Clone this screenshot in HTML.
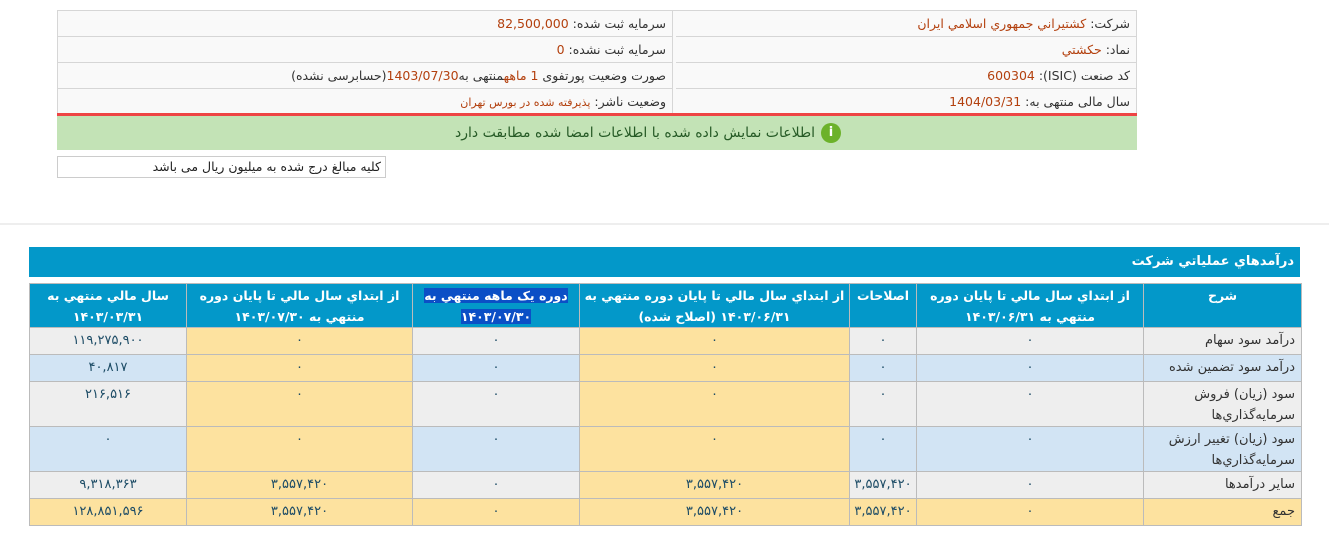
<!DOCTYPE html>
<html><head><meta charset="utf-8"><style>
*{margin:0;padding:0;box-sizing:border-box}
body{width:1329px;height:553px;background:#fff;font-family:"DejaVu Sans","Liberation Sans",sans-serif;font-size:12px;color:#333;position:relative;overflow:hidden;direction:rtl}
.box{position:absolute;left:57px;top:10px;width:1080px;height:104px;border:1px solid #d6d6d6;background:#f9f9f9}
.cell{position:absolute;height:26px;border-bottom:1px solid #d6d6d6;line-height:25px;padding-right:6px;font-size:12.5px;white-space:nowrap}
.r{color:#b3400e}
.red{position:absolute;left:57px;top:113px;width:1080px;height:3px;background:#ee4444}
.green{position:absolute;left:57px;top:116px;width:1080px;height:34px;background:#c3e3b6;color:#265a26;font-size:14px;line-height:34px;padding-right:296px}
.ic{display:inline-block;width:20px;height:20px;border-radius:50%;background:#6cb22a;color:#fff;font-weight:bold;text-align:center;line-height:20px;vertical-align:middle;margin-left:6px;font-size:13px}
.note{position:absolute;left:57px;top:156px;width:329px;height:22px;border:1px solid #ccc;line-height:20px;padding-right:4px;font-size:12.5px;color:#222}
.hr{position:absolute;left:0;top:223px;width:1329px;height:2px;background:#eee}
.bar{position:absolute;left:29px;top:247px;width:1271px;height:30px;background:#0398c9;color:#fff;font-weight:bold;font-size:13px;line-height:30px;padding-right:6px}
table{position:absolute;left:29px;top:283px;width:1272px;border-collapse:collapse;table-layout:fixed}
td,th{border:1px solid #bbb;text-align:center;vertical-align:top;font-size:13px;color:#1d4c66;padding:0}
th{background:#0398c9;color:#fff;font-weight:bold;font-size:12.5px;line-height:21px;height:43px;padding-top:1px}
td{height:26px;line-height:26px}
td.t{text-align:right;padding-right:6px;color:#333}
.g{background:#eee}.b{background:#d2e4f4}.y{background:#fde29f}
.tall td{height:44px;line-height:21px;padding-top:2px}
.hl{background:#0b4fc6}
</style></head><body>
<div class="box">
<div class="cell" style="right:0;top:0;width:460px">شرکت: <span class="r">کشتيراني جمهوري اسلامي ايران</span></div>
<div class="cell" style="right:0;top:26px;width:460px">نماد: <span class="r">حکشتي</span></div>
<div class="cell" style="right:0;top:52px;width:460px">کد صنعت (ISIC): <span class="r">600304</span></div>
<div class="cell" style="right:0;top:78px;width:460px;border-bottom:none">سال مالی منتهی به: <span class="r">1404/03/31</span></div>
<div style="position:absolute;right:463px;top:0;width:1px;height:102px;background:#d6d6d6"></div>
<div class="cell" style="right:464px;top:0;width:614px">سرمایه ثبت شده: <span class="r">82,500,000</span></div>
<div class="cell" style="right:464px;top:26px;width:614px">سرمایه ثبت نشده: <span class="r">0</span></div>
<div class="cell" style="right:464px;top:52px;width:614px">صورت وضعیت پورتفوی <span class="r">1 ماهه</span>منتهی به<span class="r">1403/07/30</span>(حسابرسی نشده)</div>
<div class="cell" style="right:464px;top:78px;width:614px;border-bottom:none">وضعیت ناشر: <span class="r" style="font-size:11px">پذيرفته شده در بورس تهران</span></div>
</div>
<div class="red"></div>
<div class="green"><span class="ic">i</span>اطلاعات نمایش داده شده با اطلاعات امضا شده مطابقت دارد</div>
<div class="note">کلیه مبالغ درج شده به میلیون ریال می باشد</div>
<div class="hr"></div>
<div class="bar">درآمدهاي عملياتي شرکت</div>
<table>
<colgroup><col style="width:158px"><col style="width:227px"><col style="width:67px"><col style="width:270px"><col style="width:167px"><col style="width:226px"><col style="width:157px"></colgroup>
<tr><th>شرح</th><th>از ابتداي سال مالي تا پايان دوره<br>منتهي به ۱۴۰۳/۰۶/۳۱</th><th>اصلاحات</th><th>از ابتداي سال مالي تا پايان دوره منتهي به<br>۱۴۰۳/۰۶/۳۱ (اصلاح شده)</th><th><span class="hl">دوره يک ماهه منتهي به</span><br><span class="hl">۱۴۰۳/۰۷/۳۰</span></th><th>از ابتداي سال مالي تا پايان دوره<br>منتهي به ۱۴۰۳/۰۷/۳۰</th><th>سال مالي منتهي به<br>۱۴۰۳/۰۳/۳۱</th></tr>
<tr><td class="t g">درآمد سود سهام</td><td class="g">۰</td><td class="g">۰</td><td class="y">۰</td><td class="g">۰</td><td class="y">۰</td><td class="g">۱۱۹,۲۷۵,۹۰۰</td></tr>
<tr><td class="t b">درآمد سود تضمين شده</td><td class="b">۰</td><td class="b">۰</td><td class="y">۰</td><td class="b">۰</td><td class="y">۰</td><td class="b">۴۰,۸۱۷</td></tr>
<tr class="tall"><td class="t g">سود (زيان) فروش سرمايه‌گذاري‌ها</td><td class="g">۰</td><td class="g">۰</td><td class="y">۰</td><td class="g">۰</td><td class="y">۰</td><td class="g">۲۱۶,۵۱۶</td></tr>
<tr class="tall"><td class="t b">سود (زيان) تغيير ارزش سرمايه‌گذاري‌ها</td><td class="b">۰</td><td class="b">۰</td><td class="y">۰</td><td class="b">۰</td><td class="y">۰</td><td class="b">۰</td></tr>
<tr><td class="t g">ساير درآمدها</td><td class="g">۰</td><td class="g">۳,۵۵۷,۴۲۰</td><td class="y">۳,۵۵۷,۴۲۰</td><td class="g">۰</td><td class="y">۳,۵۵۷,۴۲۰</td><td class="g">۹,۳۱۸,۳۶۳</td></tr>
<tr><td class="t y">جمع</td><td class="y">۰</td><td class="y">۳,۵۵۷,۴۲۰</td><td class="y">۳,۵۵۷,۴۲۰</td><td class="y">۰</td><td class="y">۳,۵۵۷,۴۲۰</td><td class="y">۱۲۸,۸۵۱,۵۹۶</td></tr>
</table>
</body></html>
